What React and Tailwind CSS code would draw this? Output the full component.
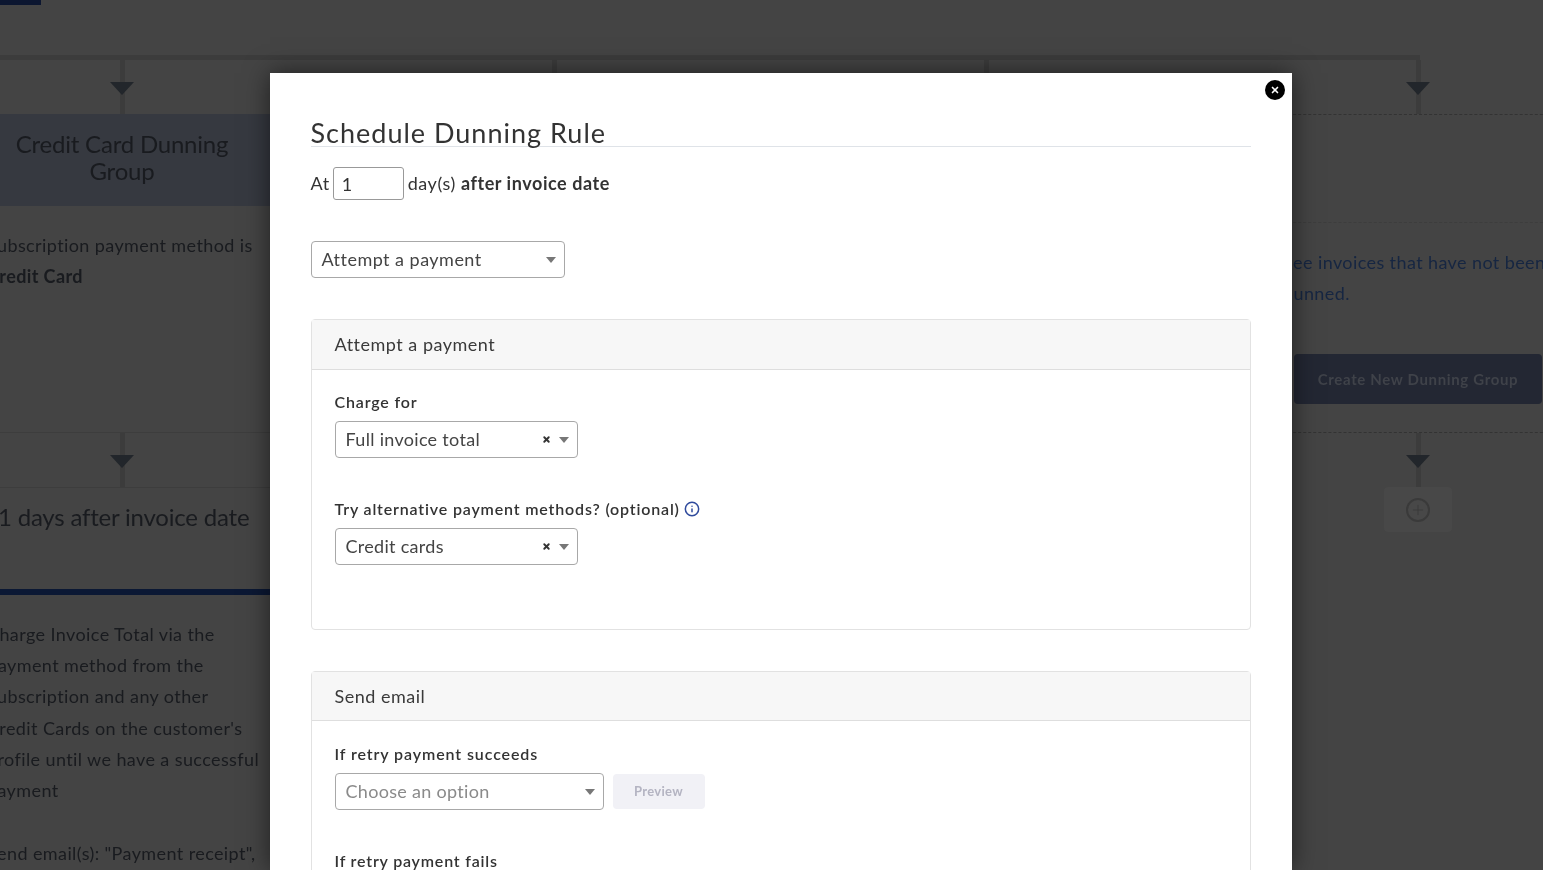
import { Info, Plus, X } from 'lucide-react';

function Arrow() {
    return (
        <div className="relative flex h-[54px] w-[5px] flex-col items-center bg-[#3c3c3c]">
            <div className="absolute top-[22px] h-0 w-0 border-x-[12.5px] border-t-[13px] border-x-transparent border-t-[#22262b]" />
        </div>
    );
}

function Caret() {
    return <span className="h-0 w-0 border-x-[5px] border-t-[6px] border-x-transparent border-t-[#777]" />;
}

// Select look-alike, the clear "x" only shows on the filled ones
function Select( { value, width, clear, placeholder } ) {
    return (
        <div className={ `flex h-[37px] items-center justify-between rounded border border-[#a8a8a8] bg-white pl-[10px] pr-[8px] text-[18px] ${ width } ${ placeholder ? 'text-[#8a8a8a]' : 'text-[#444]' }` }>
            <span>{ value }</span>
            <span className="flex items-center gap-[8px]">
                { clear && <X className="h-[9px] w-[9px] text-[#333]" strokeWidth={ 5 } /> }
                <Caret />
            </span>
        </div>
    );
}

function Panel( { title, height, headHeight, children } ) {
    return (
        <div className={ `rounded border border-[#e2e2e2] ${ height }` }>
            <div className={ `flex items-center border-b border-[#dedede] bg-[#f7f7f7] pl-[23px] text-[18px] tracking-[0.5px] text-[#3a3a3a] ${ headHeight }` }>{ title }</div>
            <div className="px-[23px]">{ children }</div>
        </div>
    );
}

function Background() {
    return (
        <div className="h-[870px] overflow-hidden bg-[#444444] text-[18px] leading-[31.2px] tracking-[0.4px] text-[#191b1f]">
            <div className="h-[5px] w-[41px] bg-[#0c1630]" />
            <div className="mt-[50px] h-[5px] w-[1420px] bg-[#3c3c3c]" />
            <div className="-ml-[94px] flex w-[1728px]">
                <div className="flex w-[432px] flex-col items-center">
                    <Arrow />
                    <div className="w-[300px]">
                        <div className="flex h-[92px] items-center justify-center bg-[#363940] px-[35px] pb-[6px] text-center text-[24px] leading-[27px] tracking-[-0.2px]">Credit Card Dunning Group</div>
                        <div className="h-[227px] border-b border-[#3d3d3d] px-[15px] pt-[24px]">
                            Subscription payment method is <b>Credit Card</b>
                        </div>
                    </div>
                    <Arrow />
                    <div className="w-[300px]">
                        <div className="h-[102px] border-t border-[#3d3d3d] pl-[26px] pt-[13px] text-[24px] leading-[32px] tracking-[-0.2px] whitespace-nowrap">1 days after invoice date</div>
                        <div className="h-[6px] bg-[#0b1834]" />
                        <div className="px-[15px] pt-[24px] whitespace-nowrap">
                            <p>
                                Charge Invoice Total via the<br />
                                Payment method from the<br />
                                Subscription and any other<br />
                                Credit Cards on the customer's<br />
                                profile until we have a successful<br />
                                payment
                            </p>
                            <p className="mt-[32px]">Send email(s): "Payment receipt",</p>
                        </div>
                    </div>
                </div>
                <div className="flex w-[432px] flex-col items-center"><div className="h-[14px] w-[5px] bg-[#3c3c3c]" /></div>
                <div className="flex w-[432px] flex-col items-center"><div className="h-[14px] w-[5px] bg-[#3c3c3c]" /></div>
                <div className="flex w-[432px] flex-col items-center">
                    <Arrow />
                    <div className="w-[300px]">
                        <div className="h-[108px] border-t border-dashed border-[#333333]" />
                        <div className="h-[211px] border-t border-b border-[#3d3d3d] border-b-[#333333] border-dashed px-[15px] pt-[24px] text-[#162642]">
                            <p>See invoices that have not been dunned.</p>
                            <div className="mt-[45px] ml-[11px] flex h-[50px] w-[248px] items-center justify-center rounded bg-[#232733] text-[15px] font-bold tracking-[0.65px] text-[#3f4249]">Create New Dunning Group</div>
                        </div>
                    </div>
                    <Arrow />
                    <div className="flex h-[45px] w-[68px] items-center justify-center rounded bg-[#484848]">
                        <span className="flex h-[24px] w-[24px] items-center justify-center rounded-full border-2 border-[#3a3a3a]">
                            <Plus className="h-[16px] w-[16px] text-[#3a3a3a]" strokeWidth={ 1.5 } />
                        </span>
                    </div>
                </div>
            </div>
        </div>
    );
}

export default function App() {
    return (
        <div className="relative h-[870px] w-[1543px] overflow-hidden font-['Lato','Open_Sans',sans-serif] blur-[0.35px]">
            <Background />
            <div className="absolute left-[269.5px] top-[73px] h-[797px] w-[1022px] bg-white px-[41px] pt-[43px] text-[#333] shadow-[0_0_24px_rgba(0,0,0,0.55)]">
                <button className="absolute right-[7px] top-[7px] flex h-[20px] w-[20px] items-center justify-center rounded-full bg-black">
                    <X className="h-[10px] w-[10px] text-white" strokeWidth={ 4 } />
                </button>
                <h1 className="h-[31px] border-b border-[#dfe3e8] text-[27px] leading-[34px] tracking-[1px] text-[#333]">Schedule Dunning Rule</h1>
                <div className="mt-[20px] flex items-center text-[18px] tracking-[0.55px]">
                    <span>At</span>
                    <input defaultValue="1" className="ml-[3px] mr-[4px] h-[33px] w-[71px] rounded-[3px] border border-[#999] pl-[8px] text-[18px]" />
                    <span>day(s)&nbsp;<b>after invoice date</b></span>
                </div>
                <div className="mt-[41px] tracking-[0.47px]">
                    <Select value="Attempt a payment" width="w-[254px]" />
                </div>
                <div className="mt-[41px] tracking-[0.3px]">
                    <Panel title="Attempt a payment" height="h-[311px]" headHeight="h-[50px]">
                        <div className="pt-[21px] text-[16px] font-semibold leading-[22px] tracking-[0.83px]">Charge for</div>
                        <div className="mt-[8px]"><Select value="Full invoice total" width="w-[243px]" clear /></div>
                        <div className="mt-[40px] flex items-center gap-[4px] text-[16px] font-semibold leading-[22px] tracking-[0.83px]">
                            Try alternative payment methods? (optional)
                            <Info className="h-[16px] w-[16px] text-[#2f4a9c]" strokeWidth={ 2.25 } />
                        </div>
                        <div className="mt-[8px]"><Select value="Credit cards" width="w-[243px]" clear /></div>
                    </Panel>
                </div>
                <div className="mt-[41px] tracking-[0.3px]">
                    <Panel title="Send email" height="h-[260px]" headHeight="h-[49px]">
                        <div className="pt-[22px] text-[16px] font-semibold leading-[22px] tracking-[0.9px]">If retry payment succeeds</div>
                        <div className="mt-[8px] flex items-center gap-[9px]">
                            <Select value="Choose an option" width="w-[269px]" placeholder />
                            <button className="h-[35px] w-[92px] rounded bg-[#f1f1f6] text-[13px] font-bold tracking-[0.3px] text-[#b4b4c2]">Preview</button>
                        </div>
                        <div className="mt-[40px] text-[16px] font-semibold leading-[22px] tracking-[0.8px]">If retry payment fails</div>
                    </Panel>
                </div>
            </div>
        </div>
    );
}
